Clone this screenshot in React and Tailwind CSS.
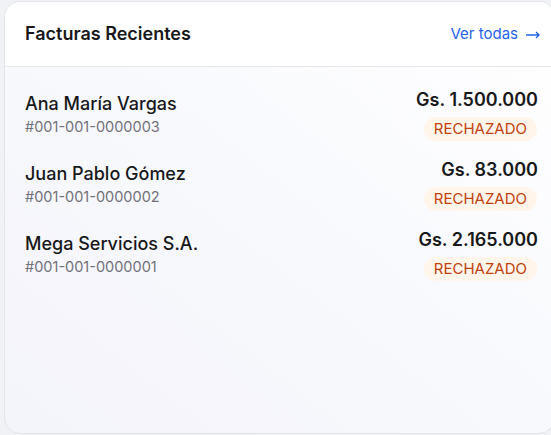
const invoices = [
    { name: 'Ana María Vargas', code: '#001-001-0000003', amount: 'Gs. 1.500.000', status: 'RECHAZADO' },
    { name: 'Juan Pablo Gómez', code: '#001-001-0000002', amount: 'Gs. 83.000', status: 'RECHAZADO' },
    { name: 'Mega Servicios S.A.', code: '#001-001-0000001', amount: 'Gs. 2.165.000', status: 'RECHAZADO' },
]

function InvoiceRow({ invoice }) {
    return (
        <div className="flex items-center justify-between">
            <div className="flex flex-col">
                <span className="text-[18px] leading-6 font-medium text-[#18181b]">
                    {invoice.name}
                </span>
                <span className="mt-px text-[14.5px] leading-5 text-[#71717a]">
                    {invoice.code}
                </span>
            </div>
            <div className="flex flex-col items-end gap-[5px]">
                <span className="text-[18px] leading-6 font-semibold text-[#18181b]">
                    {invoice.amount}
                </span>
                <span className="mr-px rounded-full bg-[#fff5eb] px-2.5 text-[15px] leading-6 text-[#c2410c]">
                    {invoice.status}
                </span>
            </div>
        </div>
    )
}

export default function App() {
    return (
        <div
            className="h-[435px] w-[551px] overflow-hidden bg-[#f1f2f5] pl-1 pt-px"
            style={{ fontFamily: 'Inter, "Noto Sans", sans-serif' }}
        >
            <div className="flex h-[433px] w-[551px] flex-col overflow-hidden rounded-2xl border border-[#e4e5ea] bg-gradient-to-tr from-[#f4f4fb] via-[#f8f9fd] to-white">
                <div className="flex h-[65px] items-center justify-between border-b border-[#e5e7eb] bg-white pl-5 pr-[14px]">
                    <h2 className="text-lg font-semibold text-[#18181b]">Facturas Recientes</h2>
                    <a className="flex items-center text-[15px] text-[#2563eb]">
                        Ver todas
                        <svg className="ml-[8px] mt-px" width="14" height="8" viewBox="0 0 14 8" fill="none" stroke="currentColor" strokeWidth="1.4">
                            <path d="M0 4h13M10 1l3 3-3 3" />
                        </svg>
                    </a>
                </div>
                <div className="flex flex-col gap-[17px] pl-5 pr-4 pt-[21px]">
                    {invoices.map((inv) => (
                        <InvoiceRow key={inv.code} invoice={inv} />
                    ))}
                </div>
            </div>
        </div>
    )
}
